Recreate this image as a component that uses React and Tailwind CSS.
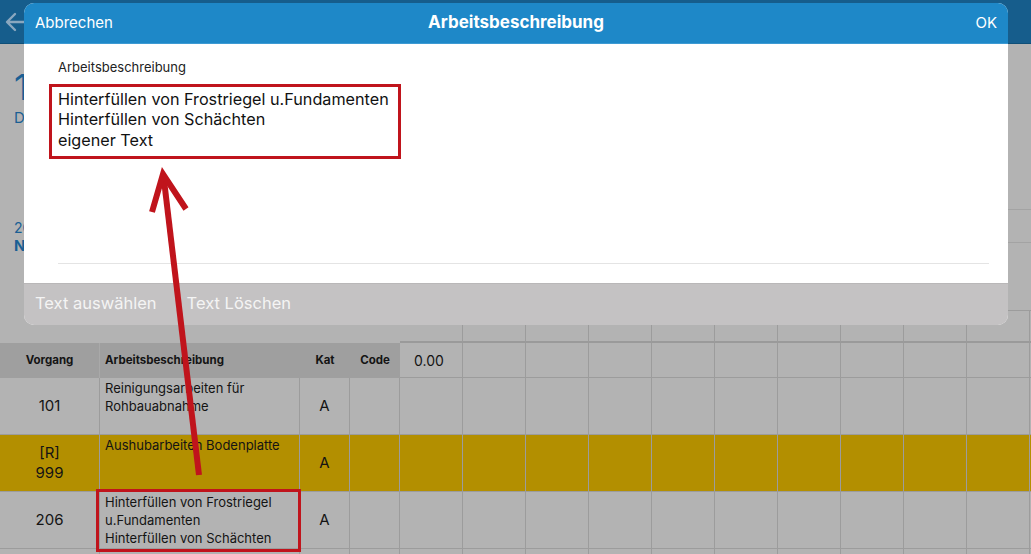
import React from 'react';

const font = { fontFamily: 'Inter, "Noto Sans", sans-serif' };

const rows = [
  { nr: '101', text: ['Reinigungsarbeiten für', 'Rohbauabnahme'], kat: 'A', bg: 'bg-[#b3b3b3]' },
  { nr: '[R]\n999', text: ['Aushubarbeiten Bodenplatte'], kat: 'A', bg: 'bg-[#b38f00]' },
  { nr: '206', text: ['Hinterfüllen von Frostriegel', 'u.Fundamenten', 'Hinterfüllen von Schächten'], kat: 'A', bg: 'bg-[#b3b3b3]' },
  { nr: '', text: [], kat: '', bg: 'bg-[#b3b3b3]' },
];

const extraCols = Array.from({ length: 10 });

const Cell = ({ className = '', children }) => (
  <div className={`border-r border-b border-[#9c9c9c] ${className}`}>{children}</div>
);

const Table = () => (
  <div className="grid grid-cols-[100px_200px_50px_50px_63px_repeat(10,63px)] text-[#141414]">
    {/* row above the header, mostly under the dialog */}
    <div className="col-span-4 h-[33px]" />
    {Array.from({ length: 11 }).map((_, i) => (
      <Cell key={`p${i}`} className="h-[33px] border-t border-t-[#9c9c9c] border-b-2 border-b-[#9a9a9a]" />
    ))}

    {/* header */}
    <div className="h-[35px] bg-[#9f9f9f] border-r border-[#a9a9a9] flex items-center justify-center text-[11.5px] font-bold">Vorgang</div>
    <div className="h-[35px] bg-[#9f9f9f] flex items-center pl-[5px] text-[11.5px] font-bold">Arbeitsbeschreibung</div>
    <div className="h-[35px] bg-[#9f9f9f] flex items-center justify-center text-[11.5px] font-bold">Kat</div>
    <div className="h-[35px] bg-[#9f9f9f] flex items-center justify-center text-[11.5px] font-bold">Code</div>
    <Cell className="h-[35px] flex items-center pl-[14px] text-[14px]">0.00</Cell>
    {extraCols.map((_, i) => (
      <Cell key={`h${i}`} className="h-[35px]" />
    ))}

    {rows.map((r, ri) => (
      <React.Fragment key={ri}>
        <Cell className={`h-[57px] ${r.bg} flex items-center justify-center text-center text-[15px] leading-[20px] whitespace-pre-line`}>{r.nr}</Cell>
        <Cell className={`h-[57px] ${r.bg} pl-[5px] pt-[1px] text-[13px] leading-[18px]`}>
          {r.text.map((t, i) => (
            <div key={i}>{t}</div>
          ))}
        </Cell>
        <Cell className={`h-[57px] ${r.bg} flex items-center justify-center text-[15px]`}>{r.kat}</Cell>
        <Cell className={`h-[57px] ${r.bg}`} />
        <Cell className={`h-[57px] ${r.bg}`} />
        {extraCols.map((_, i) => (
          <Cell key={i} className={`h-[57px] ${r.bg}`} />
        ))}
      </React.Fragment>
    ))}
  </div>
);

const Modal = () => (
  <div className="absolute left-[24px] top-[3px] w-[984px] h-[322px] rounded-[10px] overflow-hidden flex flex-col bg-white">
    <div className="h-[41px] bg-[#1e88c8] border-b border-[#3d9ad3] flex items-center justify-between px-[11px] text-white relative">
      <span className="text-[15px]">Abbrechen</span>
      <span className="absolute inset-x-0 text-center text-[17px] font-bold pointer-events-none">Arbeitsbeschreibung</span>
      <span className="text-[15px]">OK</span>
    </div>
    <div className="flex-1 flex flex-col pl-[34px] pr-[19px] pt-[14px]">
      <div className="text-[13px] text-[#222]">Arbeitsbeschreibung</div>
      <div className="mt-[6px] -ml-[9px] w-[352px] h-[75px] border-[3px] border-[#c0141c] pl-[6px] pt-[2px] text-[16.2px] leading-[20.5px] text-[#111]">
        <div>Hinterfüllen von Frostriegel u.Fundamenten</div>
        <div>Hinterfüllen von Schächten</div>
        <div>eigener Text</div>
      </div>
      <div className="mt-auto mb-[19px] border-b border-[#e4e4e4]" />
    </div>
    <div className="h-[42px] bg-[#c4c2c3] border-t border-[#b9b7b8] flex items-center gap-[30px] px-[11px] pb-[3px] text-[16.5px] text-[#f4f4f4]">
      <span>Text auswählen</span>
      <span>Text Löschen</span>
    </div>
  </div>
);

const Annotations = () => (
  <svg className="absolute inset-0 pointer-events-none" width="1031" height="554" viewBox="0 0 1031 554">
    <rect x="97.5" y="490.5" width="202" height="60" fill="none" stroke="#c0141c" strokeWidth="3" />
    <line x1="199" y1="475" x2="164" y2="180" stroke="#c0141c" strokeWidth="6" />
    <polyline points="152,212 163,174 186,209" fill="none" stroke="#c0141c" strokeWidth="6" strokeLinejoin="miter" />
  </svg>
);

export default function App() {
  return (
    <div className="relative w-[1031px] h-[554px] overflow-hidden bg-[#b3b3b3]" style={font}>
      <div className="h-[44px] bg-[#165d8c] border-b border-[#0f4f78] flex items-center pl-[5px]">
        <svg width="22" height="20" viewBox="0 0 22 20" fill="none" stroke="#8aa7bf" strokeWidth="2.4" strokeLinecap="round" strokeLinejoin="round">
          <path d="M20 10H3M10 2L2 10l8 8" />
        </svg>
      </div>

      <div className="flex h-[266px]">
        <div className="w-[400px] pl-[14px] flex flex-col items-start text-[#1a5f94]">
          <span className="mt-[26px] h-[34px] text-[36px] leading-[34px]">1</span>
          <span className="mt-[5px] text-[15px] leading-[18px]">D</span>
          <span className="mt-[92px] text-[14px] leading-[18px]">20</span>
          <span className="text-[15px] leading-[18px] font-bold">N</span>
        </div>
        <div className="flex-1 flex flex-col">
          <div className="h-[166px] border-b border-[#a3a3a3]" />
          <div className="h-[33px] border-b border-[#a3a3a3]" />
        </div>
      </div>

      <Table />

      <Modal />
      <Annotations />
    </div>
  );
}
